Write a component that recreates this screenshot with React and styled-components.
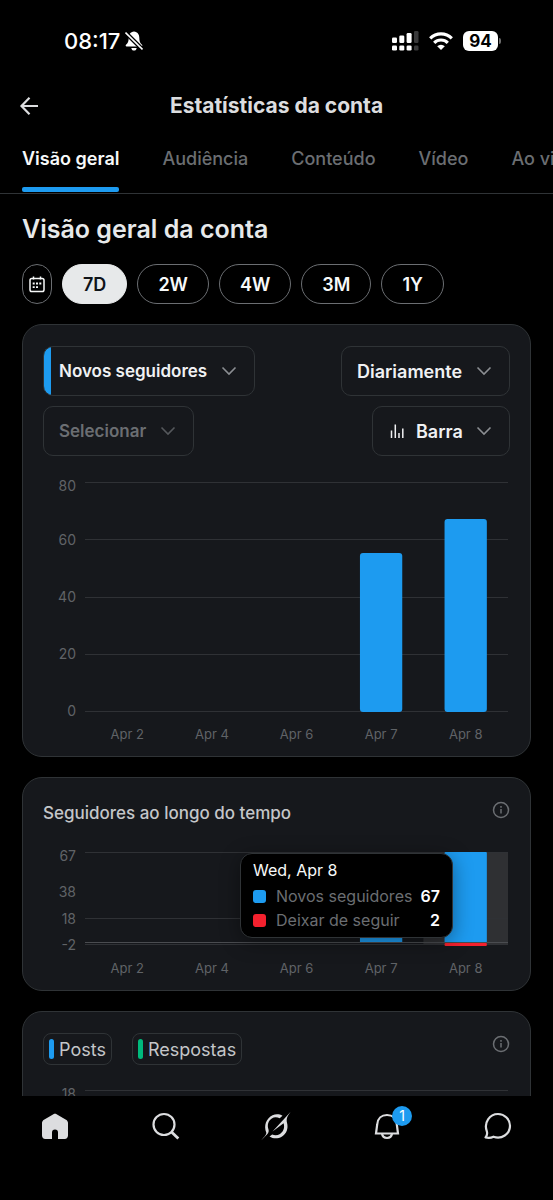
import React, { useState } from 'react';
import styled, { createGlobalStyle } from 'styled-components';

const GlobalStyle = createGlobalStyle`
	* {
		box-sizing: border-box;
	}

	body {
		margin: 0;
		background: #000;
		color: #e7e9ea;
		font-family: Inter, "Liberation Sans", sans-serif;
	}

	button, select {
		font-family: inherit;
		color: inherit;
		background: none;
		border: 0;
		padding: 0;
		margin: 0;
		cursor: pointer;
	}
`;

const Screen = styled.div`
	display: flex;
	flex-direction: column;
	height: 100vh;
	overflow: hidden;
`;

const StatusBar = styled.div`
	flex: none;
	display: flex;
	align-items: center;
	justify-content: space-between;
	height: 76px;
	padding: 6px 52px 0 64px;
	color: #fff;
`;

const StatusGroup = styled.div`
	display: flex;
	align-items: center;
	gap: ${(p) => p.$gap}px;
`;

const Clock = styled.time`
	font-size: 22px;
	line-height: 24px;
	font-weight: 500;
`;

const Battery = styled.div`
	display: flex;
	align-items: center;
	gap: 1px;

	span {
		width: 35px;
		border-radius: 6px;
		background: #fff;
		color: #000;
		font-size: 17px;
		line-height: 20px;
		font-weight: 700;
		text-align: center;
	}

	i {
		width: 2px;
		height: 6px;
		border-radius: 0 2px 2px 0;
		background: #6d6d6d;
	}
`;

const Header = styled.header`
	flex: none;
	display: grid;
	grid-template-columns: 40px 1fr 40px;
	align-items: center;
	height: 59px;
	padding: 0 19px;

	h1 {
		margin: 0;
		color: #dcdddf;
		font-size: 21px;
		line-height: 28px;
		font-weight: 700;
		text-align: center;
	}
`;

const IconButton = styled.button`
	display: flex;
	align-items: center;
	color: ${(p) => p.$color || '#dcdddf'};
`;

const Tabs = styled.nav`
	flex: none;
	display: flex;
	gap: 43px;
	padding: 12px 22px 0;
	border-bottom: 1px solid #2f3336;
	overflow: hidden;
`;

const Tab = styled.a`
	flex: none;
	color: ${(p) => (p.$active ? '#f7f9f9' : '#6b6e72')};
	font-size: 18px;
	line-height: 24px;
	font-weight: ${(p) => (p.$active ? 600 : 500)};
	text-decoration: none;
	white-space: nowrap;

	&::after {
		content: "";
		display: block;
		height: 5px;
		margin: 16px 0 1px;
		border-radius: 2px;
		background: ${(p) => (p.$active ? '#1d9bf0' : 'transparent')};
	}
`;

const Content = styled.main`
	flex: 1;
	min-height: 0;
	padding: 19px 22px 0;
	overflow-y: auto;
	scrollbar-width: none;

	> h2 {
		margin: 0 0 19px;
		font-size: 25px;
		line-height: 32px;
		font-weight: 600;
	}
`;

const Ranges = styled.div`
	display: flex;
	gap: 10px;
	margin-bottom: 20px;
`;

const Pill = styled.button`
	display: flex;
	align-items: center;
	justify-content: center;
	height: 40px;
	padding: 0 ${(p) => (p.$icon ? 6 : 20)}px;
	border: 1px solid ${(p) => (p.$active ? '#e7e9ea' : '#6b6e72')};
	border-radius: 20px;
	background: ${(p) => (p.$active ? '#e7e9ea' : '#000')};
	color: ${(p) => (p.$active ? '#0f1419' : '#f7f9f9')};
	font-size: 18px;
	font-weight: 600;
`;

const Card = styled.section`
	margin-bottom: 20px;
	padding: 21px 20px 15px;
	border: 1px solid #2f3336;
	border-radius: 20px;
	background: #16181c;
`;

const CardHeader = styled.div`
	display: flex;
	align-items: flex-start;
	justify-content: space-between;
	margin-bottom: 19px;

	h3 {
		margin: 0;
		color: #c4c6c9;
		font-size: 17px;
		line-height: 28px;
		font-weight: 500;
	}
`;

const Controls = styled.div`
	display: flex;
	flex-direction: column;
	gap: 10px;
	margin-bottom: 20px;
`;

const ControlRow = styled.div`
	display: flex;
	justify-content: space-between;
`;

const SelectBox = styled.label`
	position: relative;
	display: flex;
	align-items: center;
	height: 50px;
	border: 1px solid #2f3336;
	border-radius: 10px;
	overflow: hidden;
	background: ${(p) => (p.$accent ? `linear-gradient(90deg, ${p.$accent} 8px, transparent 8px) border-box` : 'none')};
	color: ${(p) => (p.$muted ? '#6b6e72' : '#f0f1f3')};

	select {
		appearance: none;
		height: 48px;
		padding: 0 46px 0 ${(p) => (p.$icon ? 43 : 15)}px;
		font-size: ${(p) => (p.$metric ? 17 : 18)}px;
		font-weight: 600;
		outline: none;
	}

	svg {
		position: absolute;
		pointer-events: none;
	}

	.lead {
		left: 17px;
	}

	.chevron {
		right: 17px;
		color: ${(p) => (p.$muted ? '#55585c' : '#8b8e92')};
	}
`;

const ChartRow = styled.div`
	display: flex;
	gap: 9px;

	svg {
		display: block;
		overflow: visible;
	}

	text {
		fill: #606367;
		font-size: 14px;
	}
`;

const PlotSvg = styled.svg`
	flex: 1;
	min-width: 0;
	margin-right: 2px;

	text {
		font-size: 13px;
		text-anchor: middle;
	}
`;

const TooltipAnchor = styled.div`
	position: relative;
`;

const Tooltip = styled.div`
	position: absolute;
	top: 7px;
	right: 57px;
	width: 213px;
	padding: 4px 12px 5px;
	border: 1px solid #2f3336;
	border-radius: 12px;
	background: #000;
	box-shadow: 0 4px 20px rgba(0, 0, 0, 0.4);
	color: #f7f9f9;
	font-size: 16px;
	line-height: 24px;

	p {
		margin: 0 0 2px;
	}
`;

const TooltipRow = styled.div`
	display: flex;
	align-items: center;
	color: #6b6e72;

	i {
		width: 13px;
		height: 13px;
		margin-right: 10px;
		border-radius: 3px;
		background: ${(p) => p.$color};
	}

	b {
		margin-left: auto;
		color: #fff;
		font-weight: 600;
	}
`;

const Legend = styled.div`
	display: flex;
	gap: 20px;
`;

const Chip = styled.button`
	display: flex;
	align-items: center;
	gap: 5px;
	height: 32px;
	padding: 0 5px;
	border: 1px solid #2f3336;
	border-radius: 8px;
	color: #c4c6c9;
	font-size: 18px;

	i {
		width: 5px;
		height: 20px;
		border-radius: 3px;
		background: ${(p) => p.$color};
	}
`;

const BottomNav = styled.nav`
	flex: none;
	display: grid;
	grid-template-columns: repeat(5, 1fr);
	height: 104px;
	background: #000;
`;

const NavLink = styled.a`
	position: relative;
	justify-self: center;
	height: 30px;
	margin-top: 15px;
	color: #dcdddf;

	svg {
		display: block;
	}
`;

const Badge = styled.span`
	position: absolute;
	top: -5px;
	right: -10px;
	width: 20px;
	border-radius: 10px;
	background: #1d9bf0;
	color: #fff;
	font-size: 14px;
	line-height: 20px;
	text-align: center;
`;

function Chevron() {
	return (
		<svg className="chevron" width="16" height="16" viewBox="0 0 16 16" fill="none" stroke="currentColor" strokeWidth="1.6">
			<path d="M1.5 4.5 8 11l6.5-6.5" />
		</svg>
	);
}

function InfoButton() {
	return (
		<IconButton $color="#6b6e72" aria-label="Informações">
			<svg width="19" height="22" viewBox="0 0 19 22" fill="none" stroke="currentColor" strokeWidth="1.5">
				<circle cx="10" cy="11" r="7.5" />
				<path d="M10 10v4.5M10 7v1.8" />
			</svg>
		</IconButton>
	);
}

function Dropdown({ label, value, icon, accent, muted, metric }) {
	return (
		<SelectBox $accent={accent} $muted={muted} $metric={metric} $icon={!!icon}>
			{icon}
			<select aria-label={label} defaultValue={value}>
				<option>{value}</option>
			</select>
			<Chevron />
		</SelectBox>
	);
}

const days = ['Apr 2', 'Apr 4', 'Apr 6', 'Apr 7', 'Apr 8'];

// ticks: [label, label y, line y or null]
function Chart({ height, ticks, bars = [], labels = days, baseline, children }) {
	return (
		<ChartRow>
			<svg width="33" height={height}>
				{ticks.map(([label, y]) => (
					<text key={label} x="33" y={y + 5} textAnchor="end">{label}</text>
				))}
			</svg>
			<PlotSvg height={height}>
				{bars.map((bar) => bar.band && (
					<rect key={bar.day} x={`${bar.day * 20}%`} y={bar.y} width="20%" height={baseline + 3 - bar.y} fill="#2f3033" />
				))}
				{ticks.map(([label, , line]) => line !== null && (
					<rect key={label} x="0" y={line} width="100%" height="1" fill="#2f3135" />
				))}
				{bars.map((bar) => (
					<rect key={bar.day} x={`${bar.day * 20 + 5}%`} y={bar.y} width="10%" height={baseline + 1 - bar.y} rx={bar.r} fill="#1d9bf0" />
				))}
				{children}
				{labels.map((day, i) => (
					<text key={day} x={`${i * 20 + 10}%`} y={height - 2}>{day}</text>
				))}
			</PlotSvg>
		</ChartRow>
	);
}

function SignalIcon() {
	return (
		<svg width="27" height="20" viewBox="0 0 27 20" fill="#fff">
			<rect x="0" y="6.5" width="5" height="5.5" rx="1.3" />
			<rect x="7.3" y="4.5" width="5" height="7.5" rx="1.3" />
			<rect x="14.6" y="2" width="5" height="10" rx="1.3" />
			<rect x="0" y="14.5" width="5" height="5" rx="1.3" />
			<rect x="7.3" y="14.5" width="5" height="5" rx="1.3" />
			<rect x="14.6" y="14.5" width="5" height="5" rx="1.3" />
			<rect x="22" y="0" width="4.5" height="12" rx="1.3" fill="#39393a" />
			<rect x="22" y="14.5" width="4.5" height="5" rx="1.3" fill="#39393a" />
		</svg>
	);
}

function WifiIcon() {
	return (
		<svg width="24" height="18" viewBox="0 0 24 18" fill="none" stroke="#fff" strokeWidth="3.2">
			<path d="M1.2 6.3a15.5 15.5 0 0 1 21.6 0" />
			<path d="M5.2 10.8a9.7 9.7 0 0 1 13.6 0" />
			<path d="M12 18 8.2 14.2a5.4 5.4 0 0 1 7.6 0z" fill="#fff" stroke="none" />
		</svg>
	);
}

function MutedBellIcon() {
	return (
		<svg width="18" height="20" viewBox="0 0 18 20" fill="#fff">
			<path d="M9 .5c-3.6.4-5.3 3-5.3 6 0 4-.8 5.500-2.700 7.300-.6.6-.4 1.700.6 1.700h14.800c1 0 1.200-1.100.6-1.700-1.900-1.800-2.700-3.300-2.700-7.300 0-3-1.700-5.600-5.300-6z" />
			<path d="M6.3 17h5.400c-.2 1.700-1.300 2.600-2.700 2.600S6.500 18.700 6.300 17z" />
			<path d="M.5 1.5 17.5 18.5" stroke="#000" strokeWidth="4.2" />
			<path d="M.5 1.5 17.5 18.5" stroke="#fff" strokeWidth="1.6" />
		</svg>
	);
}

const BarsIcon = () => (
	<svg className="lead" width="15" height="16" viewBox="0 0 15 16" fill="none" stroke="currentColor" strokeWidth="1.5">
		<path d="M1.5 7.5V15M5.3 1.5V15M9 10v5M12.8 5.5V15" />
	</svg>
);

function App() {
	const [range, setRange] = useState('7D');

	return (
		<Screen>
			<GlobalStyle />
			<StatusBar>
				<StatusGroup $gap={5}>
					<Clock>08:17</Clock>
					<MutedBellIcon />
				</StatusGroup>
				<StatusGroup $gap={10}>
					<SignalIcon />
					<WifiIcon />
					<Battery><span>94</span><i /></Battery>
				</StatusGroup>
			</StatusBar>

			<Header>
				<IconButton aria-label="Voltar">
					<svg width="24" height="24" viewBox="0 0 24 24" fill="none" stroke="currentColor" strokeWidth="2.2">
						<path d="M10.5 3.8 2.500 12l8 8.200M3 12h16" />
					</svg>
				</IconButton>
				<h1>Estatísticas da conta</h1>
			</Header>

			<Tabs>
				<Tab href="#geral" $active>Visão geral</Tab>
				<Tab href="#audiencia">Audiência</Tab>
				<Tab href="#conteudo">Conteúdo</Tab>
				<Tab href="#video">Vídeo</Tab>
				<Tab href="#ao-vivo">Ao vivo</Tab>
			</Tabs>

			<Content>
				<h2>Visão geral da conta</h2>

				<Ranges>
					<Pill $icon aria-label="Escolher datas">
						<svg width="16" height="17" viewBox="0 0 16 17" fill="none" stroke="currentColor" strokeWidth="1.5">
							<rect x="1" y="2.5" width="14" height="13" rx="1.8" />
							<path d="M4.5.5v3M11.5.5v3" />
							<path d="M3.7 7.5h2M7 7.5h2M10.3 7.5h2M3.7 11.2h2M7 11.2h2" strokeWidth="1.8" />
						</svg>
					</Pill>
					{['7D', '2W', '4W', '3M', '1Y'].map((item) => (
						<Pill key={item} $active={item === range} onClick={() => setRange(item)}>{item}</Pill>
					))}
				</Ranges>

				<Card>
					<Controls>
						<ControlRow>
							<Dropdown label="Métrica" value="Novos seguidores" accent="#1d9bf0" metric />
							<Dropdown label="Período" value="Diariamente" />
						</ControlRow>
						<ControlRow>
							<Dropdown label="Segunda métrica" value="Selecionar" muted metric />
							<Dropdown label="Tipo de gráfico" value="Barra" icon={<BarsIcon />} />
						</ControlRow>
					</Controls>
					<Chart
						height={265}
						baseline={235}
						ticks={[['80', 10, 6], ['60', 64, 63], ['40', 121, 121], ['20', 178, 178], ['0', 235, 235]]}
						bars={[{ day: 3, y: 77, r: 3 }, { day: 4, y: 43, r: 3 }]}
					/>
				</Card>

				<Card>
					<CardHeader>
						<h3>Seguidores ao longo do tempo</h3>
						<InfoButton />
					</CardHeader>
					<TooltipAnchor>
						<Chart
							height={129}
							baseline={96}
							ticks={[['67', 10, 6], ['38', 46, null], ['18', 73, 72], ['-2', 99, 98]]}
							bars={[{ day: 3, y: 22, r: 1 }, { day: 4, y: 6, r: 1, band: true }]}
						>
							<rect x="0" y="96" width="100%" height="1" fill="#4a4c50" />
							<rect x="85%" y="97" width="10%" height="3" rx="1" fill="#f4212e" />
						</Chart>
						<Tooltip>
							<p>Wed, Apr 8</p>
							<TooltipRow $color="#1d9bf0"><i />Novos seguidores<b>67</b></TooltipRow>
							<TooltipRow $color="#f4212e"><i />Deixar de seguir<b>2</b></TooltipRow>
						</Tooltip>
					</TooltipAnchor>
				</Card>

				<Card>
					<CardHeader>
						<Legend>
							<Chip $color="#1d9bf0"><i />Posts</Chip>
							<Chip $color="#00ba7c"><i />Respostas</Chip>
						</Legend>
						<InfoButton />
					</CardHeader>
					<Chart height={129} ticks={[['18', 10, 6]]} labels={[]} />
				</Card>
			</Content>

			<BottomNav>
				<NavLink href="#home" aria-label="Início">
					<svg width="30" height="30" viewBox="0 0 30 30" fill="currentColor">
						<path d="M13.4 3.2 4 8.7C2.8 9.4 2 10.6 2 12v12.5C2 26.4 3.3 28 5.3 28H12v-6.5a3 3 0 0 1 6 0V28h6.7c2 0 3.3-1.6 3.3-3.5V12c0-1.4-.8-2.6-2-3.3l-9.4-5.5c-1-.6-2.2-.6-3.2 0z" />
					</svg>
				</NavLink>
				<NavLink href="#busca" aria-label="Buscar">
					<svg width="30" height="30" viewBox="0 0 30 30" fill="none" stroke="currentColor" strokeWidth="2.2">
						<circle cx="13" cy="13.5" r="10.5" />
						<path d="m20.5 21 6.800 6.500" strokeWidth="2.8" />
					</svg>
				</NavLink>
				<NavLink href="#grok" aria-label="Grok">
					<svg width="30" height="30" viewBox="0 0 30 30" fill="currentColor">
						<path d="M.3 29.3C2.5 26.2 5.2 24.6 5.3 21.700 2.3 14.5 5.5 7.2 11.5 4.3 14.8 2.7 18.500 3 21.5 4.7l-2.8 2.6C16 6 13 6 10.8 7.5 7.2 9.700 6 14 7.5 18.5 8 20.3 7.5 21.8 6.2 23.2z" />
						<path d="M29.7.8 11.5 20.5 22.6 12.3C24 17 22.2 21 19 23c-2.5 1.5-5.3 1.6-7.8.5L8.5 25.5c3.8 2.5 8.6 2.4 12.2.2C25.7 22.7 27.5 17.5 26 11.8 25.2 8 26 5.5 29.7.8z" />
					</svg>
				</NavLink>
				<NavLink href="#notificacoes" aria-label="Notificações">
					<svg width="30" height="30" viewBox="0 0 30 30" fill="none" stroke="currentColor" strokeWidth="2.2">
						<path d="M5.2 13.5C5.6 7.5 9.500 4 15 4s9.4 3.5 9.8 9.5L26 22.500H4z" />
						<path d="M10 22.5c.4 3 2.500 4.5 5 4.5s4.600-1.500 5-4.500" />
					</svg>
					<Badge>1</Badge>
				</NavLink>
				<NavLink href="#mensagens" aria-label="Mensagens">
					<svg width="30" height="30" viewBox="0 0 30 30" fill="none" stroke="currentColor" strokeWidth="2.2" strokeLinejoin="round">
						<path d="M3.700 19.800C.800 11.500 6.500 3 15 3A12.200 11.800 0 0 1 27 14.800c0 8.500-8.500 13.700-16.500 10.900C8 27 5.200 27.100 2.500 26.500 4 24.800 4.600 22.500 3.700 19.800z" />
					</svg>
				</NavLink>
			</BottomNav>
		</Screen>
	);
}

export default App;
